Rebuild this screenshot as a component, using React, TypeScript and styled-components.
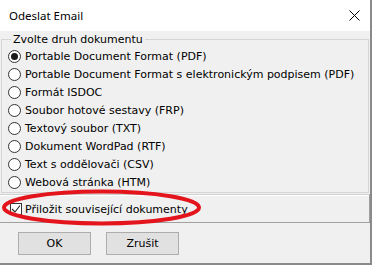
import React from "react";
import styled, { createGlobalStyle } from "styled-components";

const GlobalStyle = createGlobalStyle`
  html, body { margin: 0; padding: 0; background: #f0f0f0; }
  body { width: 372px; height: 265px; overflow: hidden; }
`;

const Window = styled.div`
  position: relative;
  width: 372px;
  height: 265px;
  box-sizing: border-box;
  border-right: 2px solid #8a8a8a;
  border-bottom: 2px solid #8a8a8a;
  background: #f0f0f0;
  display: flex;
  flex-direction: column;
  font-family: "DejaVu Sans", sans-serif;
  font-size: 11px;
  color: #000;
`;

const TitleBar = styled.div`
  height: 31px;
  flex: none;
  background: #fff;
  display: flex;
  align-items: center;
  justify-content: space-between;
  padding: 0 10px 1px 9px;
  box-sizing: border-box;
  font-family: "Noto Sans", sans-serif;
  font-size: 11.5px;
`;

const CloseIcon = styled.svg`
  width: 11px;
  height: 11px;
  display: block;
`;

const Body = styled.div`
  flex: 1;
  display: flex;
  flex-direction: column;
  padding: 2px 1px 0 1px;
`;

const GroupBox = styled.fieldset`
  margin: 0;
  padding: 1px 0 1px 6px;
  border: 1px solid #d5d5d5;
  min-width: 0;
`;

const Legend = styled.legend`
  margin-left: 3px;
  padding: 0 2px;
  line-height: 13px;
  font-size: 11px;
`;

const OptionRow = styled.label`
  height: 18px;
  display: flex;
  align-items: center;
  gap: 4px;
  white-space: nowrap;
`;

const RadioCircle = styled.span<{ $checked?: boolean }>`
  width: 13px;
  height: 13px;
  box-sizing: border-box;
  border: 1px solid #333;
  border-radius: 50%;
  background: #fff;
  display: flex;
  align-items: center;
  justify-content: center;
  flex: none;
  &::after {
    content: "";
    width: 7px;
    height: 7px;
    border-radius: 50%;
    background: #1a1a1a;
    display: ${(p) => (p.$checked ? "block" : "none")};
  }
`;

const CheckPanel = styled.div`
  margin: 1px -1px 0 -1px;
  height: 29px;
  box-sizing: border-box;
  border-top: 1px solid #d0d0d0;
  border-bottom: 1px solid #a0a0a0;
  border-right: 1px solid #a0a0a0;
  box-shadow: inset 0 1px 0 #fff;
  display: flex;
  align-items: center;
  padding: 1px 0 0 10px;
  gap: 3px;
`;

const CheckBox = styled.span`
  width: 12px;
  height: 12px;
  box-sizing: border-box;
  border: 1px solid #333;
  background: #fff;
  display: flex;
  align-items: center;
  justify-content: center;
  flex: none;
`;

const ButtonRow = styled.div`
  display: flex;
  gap: 15px;
  padding: 9px 0 0 17px;
`;

const Button = styled.button`
  width: 73px;
  height: 23px;
  box-sizing: border-box;
  border: 1px solid #adadad;
  background: #e1e1e1;
  font-family: "DejaVu Sans", sans-serif;
  font-size: 11px;
  color: #000;
  padding: 0;
`;

const Annotation = styled.svg`
  position: absolute;
  left: 0;
  top: 185px;
  width: 210px;
  height: 46px;
  pointer-events: none;
`;

const options = [
  "Portable Document Format (PDF)",
  "Portable Document Format s elektronickým podpisem (PDF)",
  "Formát ISDOC",
  "Soubor hotové sestavy (FRP)",
  "Textový soubor (TXT)",
  "Dokument WordPad (RTF)",
  "Text s oddělovači (CSV)",
  "Webová stránka (HTM)",
];

export default function App() {
  return (
    <>
      <GlobalStyle />
      <Window>
        <TitleBar>
          <span>Odeslat Email</span>
          <CloseIcon viewBox="0 0 11 11">
            <path d="M0.5 0.5 L10.5 10.5 M10.5 0.5 L0.5 10.5" stroke="#000" strokeWidth="1" />
          </CloseIcon>
        </TitleBar>
        <Body>
          <GroupBox>
            <Legend>Zvolte druh dokumentu</Legend>
            {options.map((o, i) => (
              <OptionRow key={o}>
                <RadioCircle $checked={i === 0} />
                <span>{o}</span>
              </OptionRow>
            ))}
          </GroupBox>
          <CheckPanel>
            <CheckBox>
              <svg width="10" height="10" viewBox="0 0 10 10">
                <path d="M1 5 L4 8 L9 1.5" fill="none" stroke="#222" strokeWidth="1.1" />
              </svg>
            </CheckBox>
            <span>Přiložit související dokumenty</span>
          </CheckPanel>
          <ButtonRow>
            <Button>OK</Button>
            <Button>Zrušit</Button>
          </ButtonRow>
        </Body>
        <Annotation viewBox="0 0 210 46">
          <ellipse cx="101.5" cy="22.5" rx="97.5" ry="16" fill="none" stroke="#e3141c" strokeWidth="4" />
        </Annotation>
      </Window>
    </>
  );
}
